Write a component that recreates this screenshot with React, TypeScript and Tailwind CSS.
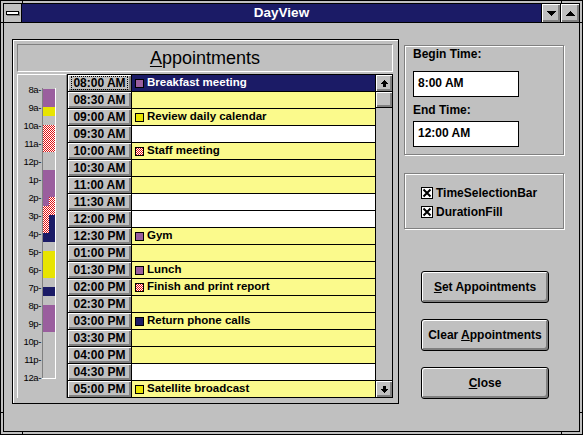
import React from 'react';

const PURPLE = '#9a5e9e';
const NAVY = '#1b1b66';
const YELLOW = '#e8e400';

type Row = { time: string; text?: string; color?: 'purple' | 'yellow' | 'red' | 'navy'; fill: 'sel' | 'y' | 'w' };

const rows: Row[] = [
  { time: '08:00 AM', text: 'Breakfast meeting', color: 'purple', fill: 'sel' },
  { time: '08:30 AM', fill: 'y' },
  { time: '09:00 AM', text: 'Review daily calendar', color: 'yellow', fill: 'y' },
  { time: '09:30 AM', fill: 'w' },
  { time: '10:00 AM', text: 'Staff meeting', color: 'red', fill: 'y' },
  { time: '10:30 AM', fill: 'y' },
  { time: '11:00 AM', fill: 'y' },
  { time: '11:30 AM', fill: 'w' },
  { time: '12:00 PM', fill: 'w' },
  { time: '12:30 PM', text: 'Gym', color: 'purple', fill: 'y' },
  { time: '01:00 PM', fill: 'y' },
  { time: '01:30 PM', text: 'Lunch', color: 'purple', fill: 'y' },
  { time: '02:00 PM', text: 'Finish and print report', color: 'red', fill: 'y' },
  { time: '02:30 PM', fill: 'y' },
  { time: '03:00 PM', text: 'Return phone calls', color: 'navy', fill: 'y' },
  { time: '03:30 PM', fill: 'y' },
  { time: '04:00 PM', fill: 'y' },
  { time: '04:30 PM', fill: 'w' },
  { time: '05:00 PM', text: 'Satellite broadcast', color: 'yellow', fill: 'y' },
];

const hourLabels = ['8a-', '9a-', '10a-', '11a-', '12p-', '1p-', '2p-', '3p-', '4p-', '5p-', '6p-', '7p-', '8p-', '9p-', '10p-', '11p-', '12a-'];

// bar segments in half hours from 8a: [start, end, fill, part]
const segments: [number, number, string, 'full' | 'left' | 'right'][] = [
  [0, 2, PURPLE, 'full'],
  [2, 3, YELLOW, 'full'],
  [4, 7, 'url(#reddither)', 'full'],
  [9, 12, PURPLE, 'full'],
  [12, 13, PURPLE, 'left'],
  [12, 13, 'url(#reddither)', 'right'],
  [13, 14, 'url(#reddither)', 'full'],
  [14, 16, 'url(#reddither)', 'left'],
  [14, 16, NAVY, 'right'],
  [16, 17, NAVY, 'full'],
  [18, 21, YELLOW, 'full'],
  [22, 23, NAVY, 'full'],
  [24, 27, PURPLE, 'full'],
];

function RedDither({ id }: { id: string }) {
  return (
    <pattern id={id} width="2" height="2" patternUnits="userSpaceOnUse">
      <rect width="2" height="2" fill="#ffffff" />
      <rect x="0" y="0" width="1" height="1" fill="#e01010" />
      <rect x="1" y="1" width="1" height="1" fill="#e01010" />
    </pattern>
  );
}

function TimeBar() {
  return (
    <svg width="14" height="291" shapeRendering="crispEdges">
      <defs>
        <RedDither id="reddither" />
      </defs>
      <rect x="0" y="0" width="1" height="290" fill="#808080" />
      <rect x="13" y="0" width="1" height="291" fill="#ffffff" />
      <rect x="0" y="290" width="14" height="1" fill="#ffffff" />
      {segments.map(([s, e, fill, part], i) => {
        const x = part === 'right' ? 7 : 1;
        const w = part === 'full' ? 12 : 6;
        return <rect key={i} x={x} y={1 + s * 9} width={w} height={(e - s) * 9} fill={fill} />;
      })}
    </svg>
  );
}

function Swatch({ color, id }: { color: Row['color']; id: string }) {
  const fill = color === 'purple' ? PURPLE : color === 'yellow' ? YELLOW : color === 'navy' ? NAVY : `url(#${id})`;
  return (
    <svg width="9" height="9" viewBox="0 0 9 9" shapeRendering="crispEdges" className="shrink-0">
      <defs>
        <RedDither id={id} />
      </defs>
      <rect x="0.5" y="0.5" width="8" height="8" fill={fill} stroke="#000" />
    </svg>
  );
}

function Arrow({ up }: { up?: boolean }) {
  return (
    <svg width="9" height="9" viewBox="0 0 9 9" shapeRendering="crispEdges">
      {up ? (
        <polygon points="4.5,1 8,5 6,5 6,8 3,8 3,5 1,5" fill="#000" />
      ) : (
        <polygon points="3,1 6,1 6,4 8,4 4.5,8 1,4 3,4" fill="#000" />
      )}
    </svg>
  );
}

function Triangle({ up }: { up?: boolean }) {
  return (
    <svg width="9" height="5" viewBox="0 0 9 5" shapeRendering="crispEdges">
      {up ? <polygon points="4.5,0 9,5 0,5" fill="#000" /> : <polygon points="0,0 9,0 4.5,5" fill="#000" />}
    </svg>
  );
}

function CheckBox() {
  return (
    <svg width="12" height="12" viewBox="0 0 12 12" shapeRendering="crispEdges" className="shrink-0">
      <rect x="0.5" y="0.5" width="11" height="11" fill="#fff" stroke="#000" />
      <path d="M2.5 2.5 L9.5 9.5 M9.5 2.5 L2.5 9.5" stroke="#000" strokeWidth="2" shapeRendering="auto" />
    </svg>
  );
}

const raised = 'shadow-[inset_1px_1px_0_#ffffff,inset_-1px_-1px_0_#808080,inset_-2px_-2px_0_#808080]';
const group = 'border border-[#808080] shadow-[inset_1px_1px_0_#ffffff,1px_1px_0_#ffffff]';
const pushBtn = `w-[128px] h-[32px] border border-black rounded-[3px] bg-[#c0c0c0] flex items-center justify-center text-[12px] font-bold text-black ${raised}`;

export default function App() {
  return (
    <div className="w-[583px] h-[435px] bg-[#c0c0c0] border border-black p-[2px] relative font-['Liberation_Sans',Arial,sans-serif] text-black select-none">
      {/* frame notches */}
      <span className="absolute left-[21px] top-[-1px] w-px h-[4px] bg-black" />
      <span className="absolute left-[560px] top-[-1px] w-px h-[4px] bg-black" />
      <span className="absolute left-[21px] bottom-[-1px] w-px h-[4px] bg-black" />
      <span className="absolute left-[560px] bottom-[-1px] w-px h-[4px] bg-black" />
      <span className="absolute top-[21px] left-[-1px] h-px w-[4px] bg-black" />
      <span className="absolute top-[21px] right-[-1px] h-px w-[4px] bg-black" />
      <span className="absolute top-[411px] left-[-1px] h-px w-[4px] bg-black" />
      <span className="absolute top-[411px] right-[-1px] h-px w-[4px] bg-black" />

      <div className="h-full border border-black flex flex-col">
        {/* TITLE BAR */}
        <div className="h-[19px] flex border-b border-black shrink-0">
          <div className="w-[18px] border-r border-black flex items-center justify-center">
            <span className="w-[13px] h-[4px] bg-white border border-black shadow-[1px_1px_0_#808080]" />
          </div>
          <div className="flex-1 bg-[#1b1b66] flex items-center justify-center text-white text-[13.5px] font-bold leading-none">
            DayView
          </div>
          <div className={`w-[19px] border-l border-black flex items-center justify-center ${raised}`}>
            <Triangle />
          </div>
          <div className={`w-[19px] border-l border-black flex items-center justify-center ${raised}`}>
            <Triangle up />
          </div>
        </div>

        {/* CLIENT */}
        <div className="flex-1 flex items-start pl-[8px] pt-[16px]">
          {/* APPOINTMENTS PANEL */}
          <div className="w-[387px] h-[365px] border border-black shadow-[inset_1px_1px_0_#ffffff] pt-[4px] pl-[4px] pr-[5px] flex flex-col shrink-0">
            <div className="h-[28px] border border-t-[#808080] border-l-[#808080] border-b-white border-r-white flex items-center justify-center text-[18px] leading-none">
              <span>
                <span className="underline underline-offset-[2px]">A</span>ppointments
              </span>
            </div>
            <div className="mt-[2px] flex h-[324px]">
              {/* time selection bar */}
              <div className="w-[50px] border-l border-t border-l-white border-t-white border-r border-r-[#808080] flex">
                <div className="w-[23px] pt-[6px] flex flex-col items-end">
                  {hourLabels.map((l) => (
                    <div key={l} className="h-[18px] leading-[18px] text-[9.5px] tracking-[-0.4px] text-black">
                      {l}
                    </div>
                  ))}
                </div>
                <div className="ml-[1px] mt-[13px]">
                  <TimeBar />
                </div>
              </div>

              {/* list */}
              <div className="w-[326px] border border-black flex">
                <div className="w-[307px] flex flex-col">
                  {rows.map((r, i) => {
                    const last = i === rows.length - 1;
                    const fill =
                      r.fill === 'sel' ? 'bg-[#1b1b66] text-white' : r.fill === 'y' ? 'bg-[#fbfa8c]' : 'bg-white';
                    return (
                      <div key={r.time} className={`flex ${last ? 'h-[16px]' : 'h-[17px] border-b border-black'}`}>
                        <div className={`w-[64px] border-r border-black flex items-center justify-center text-[12px] font-bold ${raised}`}>
                          {i === 0 ? (
                            <span className="border border-dotted border-black px-[1px] leading-[12px]">{r.time}</span>
                          ) : (
                            r.time
                          )}
                        </div>
                        <div className={`flex-1 flex items-center pl-[3px] text-[11.5px] font-bold ${fill}`}>
                          {r.text && (
                            <>
                              <Swatch color={r.color} id={`sw${i}`} />
                              <span className="ml-[3px] whitespace-nowrap">{r.text}</span>
                            </>
                          )}
                        </div>
                      </div>
                    );
                  })}
                </div>
                {/* scrollbar */}
                <div className="w-[17px] border-l border-black flex flex-col bg-[#c0c0c0]">
                  <div className={`h-[16px] flex items-center justify-center ${raised}`}>
                    <Arrow up />
                  </div>
                  <div className={`h-[16px] border-t border-black ${raised}`} />
                  <div className="flex-1 border-t border-black" />
                  <div className={`h-[17px] border-t border-black flex items-center justify-center ${raised}`}>
                    <Arrow />
                  </div>
                </div>
              </div>
            </div>
          </div>

          {/* RIGHT COLUMN */}
          <div className="ml-[5px] flex flex-col">
            <div className={`mt-[6px] w-[160px] h-[110px] pl-[8px] flex flex-col ${group}`}>
              <div className="mt-[1px] h-[14px] leading-[14px] text-[12px] font-bold">Begin Time:</div>
              <div className="mt-[10px] w-[106px] h-[26px] bg-white border border-black flex items-center pl-[4px] pb-[3px] text-[12px] font-bold">
                8:00 AM
              </div>
              <div className="mt-[6px] h-[14px] leading-[14px] text-[12px] font-bold">End Time:</div>
              <div className="mt-[4px] w-[106px] h-[26px] bg-white border border-black flex items-center pl-[4px] pb-[3px] text-[12px] font-bold">
                12:00 AM
              </div>
            </div>

            <div className={`mt-[18px] w-[160px] h-[56px] pl-[16px] pt-[11px] flex flex-col gap-[3px] ${group}`}>
              <div className="h-[16px] flex items-center gap-[3px] text-[12px] font-bold">
                <CheckBox />
                <span>TimeSelectionBar</span>
              </div>
              <div className="h-[16px] flex items-center gap-[3px] text-[12px] font-bold">
                <CheckBox />
                <span>DurationFill</span>
              </div>
            </div>

            <div className="ml-[17px] mt-[42px] flex flex-col gap-[16px]">
              <button className={pushBtn}>
                <span>
                  <span className="underline">S</span>et Appointments
                </span>
              </button>
              <button className={pushBtn}>
                <span>
                  Clear <span className="underline">A</span>ppointments
                </span>
              </button>
              <button className={pushBtn}>
                <span>
                  <span className="underline">C</span>lose
                </span>
              </button>
            </div>
          </div>
        </div>
      </div>
    </div>
  );
}
